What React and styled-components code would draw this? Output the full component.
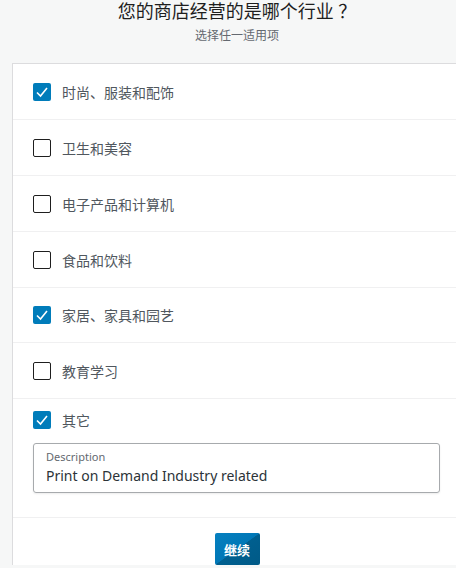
import React, { useState } from "react";
import styled, { createGlobalStyle } from "styled-components";

const GlobalStyle = createGlobalStyle`
  html, body {
    margin: 0;
    padding: 0;
    background: #f6f7f7;
    overflow: hidden;
  }
  body {
    font-family: "Noto Sans", "Noto Sans CJK SC", sans-serif;
  }
  * { box-sizing: border-box; }
`;

const Page = styled.div`
  width: 456px;
  height: 568px;
  overflow: hidden;
`;

const Header = styled.header`
  width: 474px;
  text-align: center;
`;

const Title = styled.h1`
  margin: 0;
  font-size: 18px;
  line-height: 22px;
  font-weight: 400;
  color: #1e1e1e;
`;

const Subtitle = styled.p`
  margin: 5px 0 0;
  font-size: 12px;
  line-height: 18px;
  color: #646970;
`;

const Card = styled.section`
  margin: 18px 0 0 12px;
  width: 450px;
  background: #fff;
  border: 1px solid #dcdcde;
  border-bottom: none;
`;

const Row = styled.label`
  display: flex;
  flex-direction: column;
  justify-content: center;
  min-height: ${(p) => (p.$short ? "55px" : "56px")};
  padding: ${(p) => (p.$expanded ? "12px 21px 24px 20px" : "0 21px 0 20px")};
  border-bottom: 1px solid #f0f0f1;
  cursor: pointer;
`;

const Line = styled.div`
  display: flex;
  align-items: center;
  height: 18px;
`;

const Box = styled.span`
  width: 18px;
  height: 18px;
  border-radius: 2px;
  flex-shrink: 0;
  display: flex;
  align-items: center;
  justify-content: center;
  background: ${(p) => (p.$checked ? "#007cba" : "#fff")};
  border: ${(p) => (p.$checked ? "none" : "1.5px solid #1e1e1e")};
`;

const Text = styled.span`
  margin-left: 11px;
  font-size: 14px;
  color: #50575e;
`;

const Field = styled.div`
  margin-top: 14px;
  height: 50px;
  border: 1px solid #a7aaad;
  border-radius: 3px;
  box-shadow: 0 1px 2px rgba(0, 0, 0, 0.08);
  padding: 5px 12px 0;
`;

const FieldLabel = styled.div`
  font-size: 11px;
  line-height: 16px;
  color: #646970;
`;

const FieldValue = styled.input`
  display: block;
  width: 100%;
  border: none;
  outline: none;
  padding: 0;
  margin-top: 1px;
  font-family: "Noto Sans", sans-serif;
  font-size: 14px;
  line-height: 20px;
  color: #2c3338;
  background: transparent;
`;

const Footer = styled.div`
  display: flex;
  justify-content: center;
  padding-top: 15px;
`;

const Button = styled.button`
  width: 45px;
  height: 32px;
  border: none;
  border-radius: 2px;
  background: linear-gradient(to bottom right, #0580c0 0%, #0077b6 49.5%, #005f8f 50.5%, #005a87 100%);
  color: #fff;
  font-family: "Noto Sans CJK SC", sans-serif;
  font-size: 13px;
  font-weight: 700;
  cursor: pointer;
`;

const Check = () => (
  <svg width="14" height="14" viewBox="0 0 14 14">
    <path d="M2 7.5 L5.5 11 L12 3" fill="none" stroke="#fff" strokeWidth="1.6" />
  </svg>
);

const options = [
  { id: "fashion", label: "时尚、服装和配饰", checked: true },
  { id: "health", label: "卫生和美容", checked: false },
  { id: "electronics", label: "电子产品和计算机", checked: false },
  { id: "food", label: "食品和饮料", checked: false },
  { id: "home", label: "家居、家具和园艺", checked: true },
  { id: "education", label: "教育学习", checked: false },
  { id: "other", label: "其它", checked: true },
];

export default function App() {
  const [state, setState] = useState(() =>
    Object.fromEntries(options.map((o) => [o.id, o.checked]))
  );
  const [desc, setDesc] = useState("Print on Demand Industry related");

  const toggle = (id) => setState((s) => ({ ...s, [id]: !s[id] }));

  return (
    <Page>
      <GlobalStyle />
      <Header>
        <Title>您的商店经营的是哪个行业 ？</Title>
        <Subtitle>选择任一适用项</Subtitle>
      </Header>
      <Card>
        {options.map((o) => {
          const open = o.id === "other" && state.other;
          return (
            <Row
              key={o.id}
              $expanded={open}
              $short={o.id === "home"}
              as={open ? "div" : "label"}
            >
              <Line onClick={open ? () => toggle(o.id) : undefined}>
                <Box $checked={state[o.id]} onClick={open ? undefined : () => toggle(o.id)}>
                  {state[o.id] && <Check />}
                </Box>
                <Text>{o.label}</Text>
              </Line>
              {open && (
                <Field>
                  <FieldLabel>Description</FieldLabel>
                  <FieldValue value={desc} onChange={(e) => setDesc(e.target.value)} />
                </Field>
              )}
            </Row>
          );
        })}
        <Footer>
          <Button>继续</Button>
        </Footer>
      </Card>
    </Page>
  );
}
